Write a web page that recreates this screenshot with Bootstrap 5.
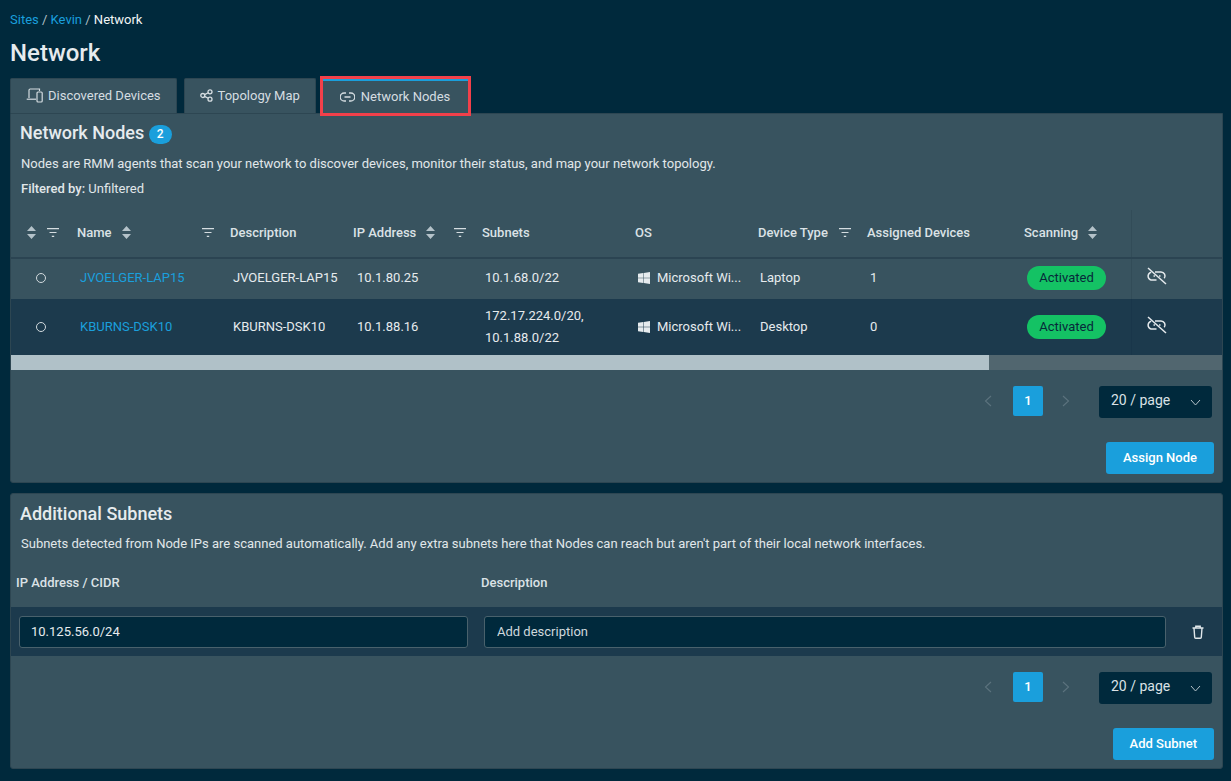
<!DOCTYPE html>
<html lang="en">
<head>
    <meta charset="UTF-8">
    <meta name="viewport" content="width=device-width, initial-scale=1.0">
    <title>Network</title>
    <link rel="stylesheet" href="https://cdn.jsdelivr.net/npm/bootstrap@5.3.0/dist/css/bootstrap.min.css">
    <style>
        html, body { height: 781px; overflow: hidden; }
        body {
            font-family: Roboto, "Liberation Sans", sans-serif;
            font-size: 13px;
            background-color: #00293c;
            color: #e6ebee;
        }
        a { color: #1a9fdc; text-decoration: none; }
        .page-wrap { padding: 11px 8px 0 10px; }
        .crumbs { line-height: 17px; height: 17px; color: #b3c1c8; }
        .crumbs span { color: #f2f5f6; }
        .page-title { font-size: 24px; font-weight: 500; line-height: 30px; margin: 10px 0 10px; color: #e6ebee; }
        .tab-row { display: flex; gap: 7px; height: 35px; position: relative; z-index: 2; }
        .tab-item {
            display: flex; align-items: center; gap: 5px; height: 35px; padding: 0 15px 2px;
            background: #38535f; color: #d5dde1; border: 1px solid #2d4652; border-bottom: 0;
            border-radius: 2px 2px 0 0; line-height: 1;
        }
        .tab-on {
            width: 145px; margin: 1px 0 0 0; height: 34px; padding: 0 0 2px 17px; border: 0; border-top: 2px solid #1a9fdc;
            outline: 3px solid #f2404a; gap: 6px; border-radius: 0;
        }
        .tab-on svg { margin-top: 1px; }
        .panel-box {
            background: #38535f; border: 1px solid #2d4652; border-radius: 0 0 3px 3px;
        }
        .panel-one { height: 370px; }
        .panel-two { height: 276px; margin-top: 10px; border-radius: 3px; }
        .panel-head { padding: 7px 9px 0; }
        .panel-two .panel-head { padding-top: 8px; }
        .panel-title { font-size: 18px; font-weight: 500; line-height: 24px; margin: 0; color: #e6ebee; }
        .count-pill {
            display: inline-flex; align-items: center; justify-content: center; width: 23px; height: 19px;
            border-radius: 10px; background: #1a9fdc; color: #fff; font-size: 12px; vertical-align: 1px;
        }
        .panel-text { line-height: 16px; margin: 11px 0 0 1px; color: #e1e7ea; }
        .panel-two .panel-text { margin-top: 10px; }
        .filter-text { line-height: 16px; margin: 9px 0 0 1px; font-size: 13px; color: #e1e7ea; }
        .filter-text b { font-weight: 500; }
        .node-table { table-layout: fixed; width: 1211px; margin: 13px 0 0; border-collapse: collapse; }
        .node-table th {
            height: 48px; padding: 0 0 2px 7px; font-weight: 500; color: #dbe2e6; font-size: 13px;
            background: #38535f; border: 0; border-bottom: 2px solid #2b4452; vertical-align: middle; white-space: nowrap;
        }
        .node-table th:nth-child(4) { padding-left: 6px; }
        .node-table td {
            padding: 0 0 0 10px; color: #e6ebee; background: #38535f; border: 0; vertical-align: middle;
            line-height: 22px; box-shadow: none;
        }
        .node-table td:nth-child(7) { padding-left: 9px; }
        .node-table .row-a td { height: 41px; padding-bottom: 2px; }
        .node-table .row-b td { height: 56px; background: #1c3a4d; }
        .node-table .act-col { border-left: 1px solid #324c58; padding-left: 15px; }
        .node-table th.act-col { border-left: 1px solid #324c58; }
        .node-table .row-b .act-col { border-left-color: #19364a; }
        .act-col svg { display: block; margin-top: -4px; }
        .head-flex { display: flex; align-items: center; justify-content: space-between; }
        .head-name { display: flex; align-items: center; gap: 10px; }
        .radio-dot { display: block; width: 10px; height: 10px; border: 1px solid #d2dade; border-radius: 50%; margin-left: 15px; }
        .os-cell { display: flex; align-items: center; gap: 7px; white-space: nowrap; }
        .on-pill {
            display: inline-block; width: 79px; height: 24px; line-height: 24px; text-align: center;
            border-radius: 12px; background: #14c264; color: #07293a; font-size: 13px;
        }
        .scroll-track { height: 15px; background: #51666f; }
        .scroll-thumb { height: 15px; background: #b0c1c8; }
        .pager-row { display: flex; justify-content: flex-end; align-items: flex-start; padding-right: 10px; }
        .pager-one { margin-top: 16px; }
        .pager-chev { width: 30px; height: 30px; display: flex; align-items: center; justify-content: center; }
        .chev-prev { padding-right: 4px; }
        .pager-num {
            width: 30px; height: 30px; margin: 0 8px; border-radius: 2px; background: #1a9fdc; color: #fff;
            display: flex; align-items: center; justify-content: center; font-weight: 500;
        }
        .page-size {
            width: 113px; height: 32px; margin-left: 18px; padding: 0 11px 3px 12px; border-radius: 3px; background: #00293c;
            display: flex; align-items: center; justify-content: space-between; font-size: 14px; color: #dbe2e6;
        }
        .page-size svg { margin-top: 3px; }
        .action-row { display: flex; justify-content: flex-end; padding-right: 8px; margin-top: 24px; }
        .main-btn {
            height: 32px; padding: 0 17px; background: #1a9fdc; border: 0; border-radius: 3px; color: #fff;
            font-size: 13px; font-weight: 500; --bs-btn-hover-bg: #1a9fdc; --bs-btn-hover-color: #fff;
        }
        .subnet-head { display: flex; height: 48px; align-items: center; font-weight: 500; font-size: 13px; color: #dbe2e6; margin-top: 7px; }
        .subnet-head div:first-child { width: 470px; padding-left: 5px; }
        .subnet-row { display: flex; align-items: center; height: 49px; background: #1c3a4d; padding-left: 8px; }
        .subnet-input {
            height: 32px; background: #00293c; border: 1px solid #49616c; border-radius: 3px; color: #e6ebee;
            font-size: 13px; padding: 0 11px; min-height: 0; box-shadow: none;
        }
        .subnet-input::placeholder { color: #cfd8dc; opacity: 1; }
        .subnet-input:focus { background: #00293c; color: #e6ebee; border-color: #49616c; box-shadow: none; }
        .input-ip { width: 449px; flex: none; }
        .input-desc { width: 682px; flex: none; margin-left: 16px; padding-left: 12px; }
        .trash-btn { margin-left: 25px; display: flex; }
        .pager-two { margin-top: 16px; }
    </style>
</head>
<body>
    <div class="page-wrap">
        <div class="crumbs"><a href="#">Sites</a> / <a href="#">Kevin</a> / <span>Network</span></div>
        <h1 class="page-title">Network</h1>

        <div class="tab-row">
            <div class="tab-item">
                <svg width="17" height="15" viewBox="0 0 17 15" fill="none" stroke="#d5dde1" stroke-width="1.2"><path d="M3 10V2.2C3 1.5 3.5 1 4.2 1H13.5V3"/><path d="M.7 11.2H10"/><rect x="11" y="4" width="5.2" height="10" rx="1"/></svg>
                Discovered Devices
            </div>
            <div class="tab-item tab-mid">
                <svg width="13" height="13" viewBox="0 0 13 13" fill="none" stroke="#d5dde1" stroke-width="1.3"><circle cx="2.8" cy="6.5" r="2"/><circle cx="10" cy="2.8" r="2"/><circle cx="10" cy="10.2" r="2"/><path d="M4.6 5.6 8.2 3.7M4.6 7.4 8.2 9.3"/></svg>
                Topology Map
            </div>
            <div class="tab-item tab-on">
                <svg width="15" height="10" viewBox="0 0 15 10" fill="none" stroke="#d5dde1" stroke-width="1.3"><path d="M6 1H4.2a3.9 3.9 0 0 0 0 8H6M9 1h1.800a3.900 3.900 0 0 1 0 8H9M4.500 5h6"/></svg>
                Network Nodes
            </div>
        </div>

        <div class="panel-box panel-one">
            <div class="panel-head">
                <h2 class="panel-title">Network Nodes <span class="count-pill">2</span></h2>
                <p class="panel-text">Nodes are RMM agents that scan your network to discover devices, monitor their status, and map your network topology.</p>
                <p class="filter-text"><b>Filtered by:</b> Unfiltered</p>
            </div>

            <table class="table node-table" id="node-table">
                <colgroup>
                    <col style="width:59px"><col style="width:153px"><col style="width:124px"><col style="width:128px"><col style="width:153px"><col style="width:123px"><col style="width:109px"><col style="width:157px"><col style="width:114px"><col style="width:91px">
                </colgroup>
                <thead>
                    <tr>
                        <th><span class="head-flex" id="pick-head"></span></th>
                        <th data-sort="1" data-filter="1">Name</th>
                        <th>Description</th>
                        <th data-sort="1" data-filter="1">IP Address</th>
                        <th>Subnets</th>
                        <th>OS</th>
                        <th data-filter="1">Device Type</th>
                        <th>Assigned Devices</th>
                        <th data-sort="1">Scanning</th>
                        <th class="act-col"></th>
                    </tr>
                </thead>
                <tbody id="node-body"></tbody>
            </table>
            <div class="scroll-track"><div class="scroll-thumb" id="scroll-thumb"></div></div>

            <div class="pager-row pager-one" data-pager></div>
            <div class="action-row"><button class="btn main-btn">Assign Node</button></div>
        </div>

        <div class="panel-box panel-two">
            <div class="panel-head">
                <h2 class="panel-title">Additional Subnets</h2>
                <p class="panel-text">Subnets detected from Node IPs are scanned automatically. Add any extra subnets here that Nodes can reach but aren't part of their local network interfaces.</p>
            </div>
            <div class="subnet-head"><div>IP Address / CIDR</div><div>Description</div></div>
            <div class="subnet-row">
                <input class="form-control subnet-input input-ip" value="10.125.56.0/24">
                <input class="form-control subnet-input input-desc" placeholder="Add description">
                <span class="trash-btn">
                    <svg width="14" height="14" viewBox="0 0 14 14" fill="none" stroke="#e1e7ea" stroke-width="1.4"><path d="M1.500 3h11M4.800 3V1.200h4.400V3M3 3l.7 9.200c0 .6.500 1 1 1h4.600c.5 0 1-.4 1-1L11 3"/></svg>
                </span>
            </div>
            <div class="pager-row pager-two" data-pager></div>
            <div class="action-row"><button class="btn main-btn">Add Subnet</button></div>
        </div>
    </div>

    <script src="https://cdn.jsdelivr.net/npm/bootstrap@5.3.0/dist/js/bootstrap.bundle.min.js"></script>
    <script>
        const sortIcon = `<svg width="9" height="13" viewBox="0 0 9 13" fill="#b4c2c9"><path d="M4.500 0 9 5H0zM0 8h9l-4.500 5z"/></svg>`;
        const filterIcon = `<svg width="12" height="9" viewBox="0 0 12 9" fill="none" stroke="#d5dde1" stroke-width="1.200"><path d="M0 .7h12M2.500 4.500h7M4.800 8.300h2.400"/></svg>`;
        const winIcon = `<svg width="12" height="12" viewBox="0 0 12 12" fill="#e6ebee"><path d="M0 1.700 5.300 1v4.800H0zM5.800.9 12 0v5.800H5.800zM0 6.300h5.300V11L0 10.300zM5.800 6.300H12V12l-6.200-.9z"/></svg>`;
        const unlinkIcon = `<svg width="20" height="18" viewBox="0 0 20 18" fill="none" stroke="#e6ebee" stroke-width="1.500"><path d="M1 1l18 16"/><path d="M4.200 5.200A4 4 0 0 0 6 13h3.500M8 5h6a4 4 0 0 1 3.300 6.300M6.500 9H8M12 9h1.500"/></svg>`;
        const chevLeft = `<svg width="8" height="12" viewBox="0 0 8 12" fill="none" stroke="#5c737e" stroke-width="1.100"><path d="M7 1 1.500 6 7 11"/></svg>`;
        const chevRight = `<svg width="8" height="12" viewBox="0 0 8 12" fill="none" stroke="#5c737e" stroke-width="1.100"><path d="M1 1l5.500 5L1 11"/></svg>`;
        const chevDown = `<svg width="11" height="7" viewBox="0 0 11 7" fill="none" stroke="#b4c2c9" stroke-width="1"><path d="M1 1l4.500 5L10 1"/></svg>`;

        const nodes = [
            { name: "JVOELGER-LAP15", ip: "10.1.80.25", subnets: "10.1.68.0/22", type: "Laptop", count: 1, row: "row-a" },
            { name: "KBURNS-DSK10", ip: "10.1.88.16", subnets: "172.17.224.0/20,<br>10.1.88.0/22", type: "Desktop", count: 0, row: "row-b" }
        ];

        document.getElementById("pick-head").innerHTML = `<span class="d-flex align-items-center gap-2 pick-inner">${sortIcon}<span class="d-flex">${filterIcon}</span></span>`;
        document.querySelector(".pick-inner").style.marginLeft = "9px";
        document.querySelector(".pick-inner .d-flex").style.marginLeft = "3px";
        document.getElementById("scroll-thumb").style.width = "978px";

        // header cells with sort and filter controls
        document.querySelectorAll("#node-table th[data-sort], #node-table th[data-filter]").forEach(th => {
            let label = th.textContent;
            let left = `<span class="head-name">${label}${th.dataset.sort ? sortIcon : ""}</span>`;
            let right = th.dataset.filter ? `<span class="d-flex filter-gap">${filterIcon}</span>` : "";
            th.innerHTML = `<span class="head-flex">${left}${right}</span>`;
        });
        document.querySelectorAll(".filter-gap").forEach(f => f.style.marginRight = "9px");

        let body = document.getElementById("node-body");
        nodes.forEach(n => {
            body.innerHTML += `<tr class="${n.row}">
                <td><span class="radio-dot"></span></td>
                <td><a href="#">${n.name}</a></td>
                <td>${n.name}</td>
                <td>${n.ip}</td>
                <td>${n.subnets}</td>
                <td><span class="os-cell">${winIcon}Microsoft Wi...</span></td>
                <td>${n.type}</td>
                <td>${n.count}</td>
                <td><span class="on-pill">Activated</span></td>
                <td class="act-col">${unlinkIcon}</td>
            </tr>`;
        });

        document.querySelectorAll("[data-pager]").forEach(p => {
            p.innerHTML = `<span class="pager-chev chev-prev">${chevLeft}</span><span class="pager-num">1</span><span class="pager-chev">${chevRight}</span><span class="page-size">20 / page ${chevDown}</span>`;
        });
    </script>
</body>
</html>
